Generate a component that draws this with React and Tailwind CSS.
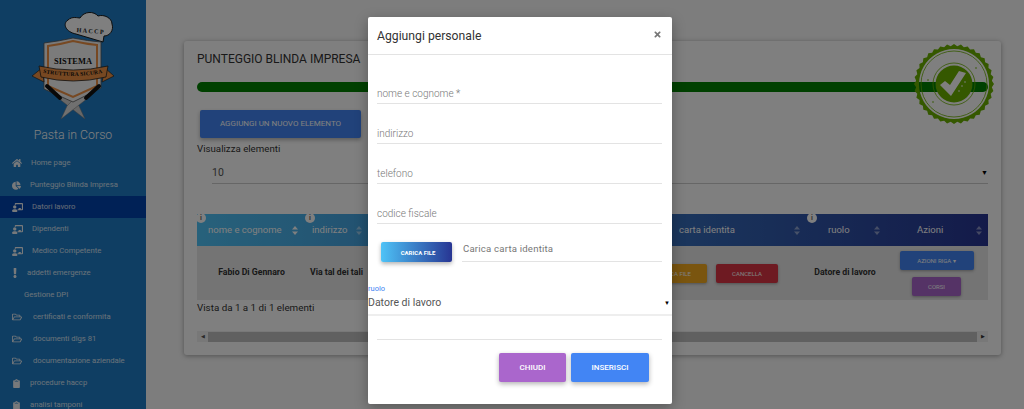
import React from "react";
import { FaHome, FaChartPie, FaChalkboardTeacher, FaExclamation, FaRegFolderOpen, FaClipboard, FaTimes } from "react-icons/fa";

const font = { fontFamily: "Roboto, 'Liberation Sans', sans-serif" };

const menu = [
  { icon: FaHome, label: "Home page", pl: "pl-[12px]", gap: "w-[19px]", size: 10 },
  { icon: FaChartPie, label: "Punteggio Blinda Impresa", pl: "pl-[12px]", gap: "w-[18px]", size: 9 },
  { icon: FaChalkboardTeacher, label: "Datori lavoro", pl: "pl-[12px]", gap: "w-[20px]", size: 11, active: true },
  { icon: FaChalkboardTeacher, label: "Dipendenti", pl: "pl-[12px]", gap: "w-[20px]", size: 11 },
  { icon: FaChalkboardTeacher, label: "Medico Competente", pl: "pl-[12px]", gap: "w-[20px]", size: 11 },
  { icon: FaExclamation, label: "addetti emergenze", pl: "pl-[10px]", gap: "w-[17px]", size: 10 },
  { label: "Gestione DPI", pl: "pl-[24px]" },
  { icon: FaRegFolderOpen, label: "certificati e conformita", pl: "pl-[12px]", gap: "w-[21px]", size: 10 },
  { icon: FaRegFolderOpen, label: "documenti dlgs 81", pl: "pl-[12px]", gap: "w-[21px]", size: 10 },
  { icon: FaRegFolderOpen, label: "documentazione aziendale", pl: "pl-[12px]", gap: "w-[21px]", size: 10 },
  { icon: FaClipboard, label: "procedure haccp", pl: "pl-[12px]", gap: "w-[18px]", size: 9 },
  { icon: FaClipboard, label: "analisi tamponi", pl: "pl-[12px]", gap: "w-[18px]", size: 9 },
];

function Logo() {
  return (
    <svg width="100" height="112" viewBox="0 0 100 112" className="block">
      <path d="M34 86 L41 80 L55 94 L61 107 Z" fill="#cfcfcf" stroke="#777" strokeWidth="0.5" />
      <path d="M64 86 L57 80 L43 94 L37 107 Z" fill="#e0e0e0" stroke="#777" strokeWidth="0.5" />
      <path d="M52 22 C42 20 38 12 44 8 C48 4 54 6 56 6 C60 -1 70 -1 74 4 C80 2 88 6 88 12 C90 18 86 24 80 24 L79 30 Z" fill="#fff" stroke="#1a1a1a" strokeWidth="1" />
      <text x="66" y="21" fontSize="6.2" fontWeight="700" textAnchor="middle" fontFamily="'Liberation Serif', serif" fill="#222" transform="rotate(4 66 21)" textLength="27">HACCP</text>
      <path d="M20 31 Q36 29 49 26 Q64 29 77 30 L77 76 L49 90 L20 77 Z" fill="#f2f2f2" stroke="#555" strokeWidth="0.8" />
      <path d="M24 34 Q38 32 49 29 Q62 32 73 33 L73 74 L49 85 L24 74 Z" fill="#f6f6f6" stroke="#ee9144" strokeWidth="2" />
      <text x="49" y="52" fontSize="8.4" fontWeight="700" textAnchor="middle" fontFamily="'Liberation Serif', serif" fill="#111" textLength="38">SISTEMA</text>
      <path d="M18 56 L8 64 L20 70 Z" fill="#ee9144" stroke="#222" strokeWidth="0.7" />
      <path d="M81 56 L90 64 L78 70 Z" fill="#ee9144" stroke="#222" strokeWidth="0.7" />
      <path d="M15 54 Q49 62 84 54 L82 65 Q49 73 17 65 Z" fill="#ee9144" stroke="#222" strokeWidth="0.8" />
      <path id="band" d="M18 60.5 Q49 67.5 81 60.5" fill="none" />
      <text fontSize="5.6" fontWeight="700" fontFamily="'Liberation Serif', serif" fill="#111">
        <textPath href="#band" startOffset="1" textLength="60">STRUTTURA SICURA</textPath>
      </text>
      <path d="M23 74 L36 86" stroke="#111" strokeWidth="4" strokeLinecap="round" />
      <path d="M75 74 L62 86" stroke="#111" strokeWidth="4" strokeLinecap="round" />
    </svg>
  );
}

function Seal() {
  const n = 36;
  let d = "";
  for (let i = 0; i < n * 2; i++) {
    const r = i % 2 === 0 ? 40 : 38;
    const a = (i / (n * 2)) * Math.PI * 2;
    d += (i === 0 ? "M" : "L") + (40 + r * Math.cos(a)).toFixed(2) + " " + (40 + r * Math.sin(a)).toFixed(2) + " ";
  }
  d += "Z";
  return (
    <svg width="80" height="80" viewBox="0 0 80 80" className="block">
      <path d={d + " M40 5 a35 35 0 1 0 0.01 0 Z"} fill="#6ab000" fillRule="evenodd" />
      <circle cx="40" cy="40" r="33" fill="none" stroke="#6ab000" strokeWidth="0.8" />
      <circle cx="40" cy="40" r="21" fill="none" stroke="#6ab000" strokeWidth="0.8" />
      <circle cx="40" cy="40" r="18.5" fill="#6ab000" />
      <path d="M26 41 L37 52 L52 29 L45 27 L36 41 L31 37 Z" fill="#fff" />
      <circle cx="48" cy="42" r="0.8" fill="#fff" />
      <circle cx="51" cy="38" r="0.8" fill="#fff" />
      <circle cx="45" cy="47" r="0.8" fill="#fff" />
      <circle cx="62" cy="24" r="0.8" fill="#6ab000" />
      <circle cx="19" cy="58" r="0.8" fill="#6ab000" />
      <circle cx="14" cy="36" r="0.8" fill="#6ab000" />
    </svg>
  );
}

function Sort({ light }) {
  return (
    <svg width="6" height="9" viewBox="0 0 6 9" className="block shrink-0" fill="#ffffff" opacity={light ? 1 : 0.45}>
      <path d="M3 0 L6 3.6 L0 3.6 Z" />
      <path d="M3 9 L6 5.4 L0 5.4 Z" />
    </svg>
  );
}

function Info({ className }) {
  return (
    <span className={"absolute w-[10px] h-[10px] rounded-full bg-white text-[#666] text-[7px] leading-[10px] font-bold text-center " + className}>i</span>
  );
}

function Field({ label }) {
  return (
    <div className="h-[40px] flex items-end border-b border-[#e3e3e3]">
      <span className="text-[10px] leading-[18px] font-light text-[#777]">{label}</span>
    </div>
  );
}

export default function App() {
  return (
    <div className="relative flex w-[1024px] h-[409px] overflow-hidden bg-[#fafafa]" style={font}>
      <aside className="w-[146px] shrink-0 h-[409px] overflow-hidden bg-[#1e7cc6] text-white">
        <div className="h-[126px] pt-[12px] pl-[24px]"><Logo /></div>
        <div className="h-[26px] text-center text-[12.3px] leading-[18px] font-light text-white">Pasta in Corso</div>
        <nav className="flex flex-col">
          {menu.map((m, i) => {
            const I = m.icon;
            return (
              <div key={i} className={"h-[22px] shrink-0 flex items-center text-[7.7px] text-white " + m.pl + (m.active ? " bg-[#0042ac]" : "")}>
                {I && (
                  <span className={"flex items-center shrink-0 " + m.gap}>
                    <I size={m.size} color="#eef2f6" />
                  </span>
                )}
                <span className="opacity-80 whitespace-nowrap">{m.label}</span>
              </div>
            );
          })}
        </nav>
      </aside>

      <main className="flex-1 pl-[38px] pt-[41px]">
        <section className="relative w-[817px] h-[314px] bg-white rounded-[3px] shadow-[0_1px_5px_rgba(0,0,0,0.35)] px-[13px] pt-[10px]">
          <h1 className="text-[12px] leading-[17px] text-[#333] font-normal whitespace-nowrap">PUNTEGGIO BLINDA IMPRESA</h1>
          <div className="mt-[14px] h-[10px] w-[791px] rounded-full bg-[#008000]" />
          <button className="block mt-[18px] ml-[3px] w-[161px] h-[28px] bg-[#4285f4] rounded-[2px] shadow-[0_2px_4px_rgba(0,0,0,0.3)] text-white text-[8px] uppercase">Aggiungi un nuovo elemento</button>
          <div className="mt-[4px] text-[9.7px] leading-[14px] text-[#333]">Visualizza elementi</div>
          <div className="mt-[7px] ml-[15px] w-[776px] h-[21px] border-b border-[#ccc] flex items-center justify-between text-[10.5px] text-[#555]">
            <span>10</span>
            <span className="text-[7px] text-black">▼</span>
          </div>

          <div className="relative mt-[30px] w-[791px]">
            <div className="grid grid-cols-[108px_367px_133px_80px_103px] h-[32px] bg-gradient-to-r from-[#4fc3f7] to-[#283593] items-center text-white text-[9.5px]">
              <div className="flex items-center pl-[11px]"><span className="w-[84px]">nome e cognome</span><Sort light /></div>
              <div className="flex items-center pl-[7px]"><span className="w-[44px]">indirizzo</span><Sort /></div>
              <div className="flex items-center pl-[7px]"><span className="w-[115px]">carta identita</span><Sort /></div>
              <div className="flex items-center pl-[23px]"><span className="w-[46px]">ruolo</span><Sort /></div>
              <div className="flex items-center pl-[32px]"><span className="w-[59px]">Azioni</span><Sort /></div>
            </div>
            <Info className="left-[-1px] top-[-1px]" />
            <Info className="left-[108px] top-[-1px]" />
            <Info className="left-[610px] top-[-1px]" />

            <div className="grid grid-cols-[108px_367px_133px_80px_103px] h-[54px] bg-[#e8e8e8] items-center text-[8.7px] font-bold text-[#333]">
              <div className="text-center whitespace-nowrap pl-[1px]">Fabio Di Gennaro</div>
              <div className="flex items-center justify-between">
                <span className="pl-[5px] whitespace-nowrap">Via tal dei tali</span>
                <button className="shrink-0 w-[77px] h-[19px] ml-auto mr-[-35px] bg-[#f5ab1e] rounded-[2px] shadow-[0_1px_3px_rgba(0,0,0,0.3)] text-white text-[6px] font-normal text-right pr-[16px]">CARICA FILE</button>
              </div>
              <div className="pl-[44px]">
                <button className="w-[62px] h-[19px] bg-[#dc3545] rounded-[2px] shadow-[0_1px_3px_rgba(0,0,0,0.3)] text-white text-[6px] font-normal">CANCELLA</button>
              </div>
              <div className="text-center whitespace-nowrap">Datore di lavoro</div>
              <div className="flex flex-col items-center gap-[7px]">
                <button className="w-[74px] h-[19px] bg-[#4285f4] rounded-[2px] shadow-[0_1px_3px_rgba(0,0,0,0.3)] text-white text-[6px] font-normal">AZIONI RIGA ▾</button>
                <button className="w-[49px] h-[19px] bg-[#aa66cc] rounded-[2px] shadow-[0_1px_3px_rgba(0,0,0,0.3)] text-white text-[6px] font-normal">CORSI</button>
              </div>
            </div>
          </div>
          <div className="mt-[1px] text-[9.8px] leading-[14px] text-[#333]">Vista da 1 a 1 di 1 elementi</div>
          <div className="mt-[16px] w-[791px] h-[11px] bg-[#f1f1f1] flex items-center">
            <span className="w-[11px] text-center text-[5px] text-[#555]">◀</span>
            <div className="w-[769px] h-[10px] bg-[#c1c1c1]" />
            <span className="w-[11px] text-center text-[5px] text-[#333]">▶</span>
          </div>
          <div className="absolute right-[7px] top-[3px]"><Seal /></div>
        </section>
      </main>

      <div className="absolute inset-0 bg-black/50" />

      <div className="absolute left-[368px] top-[17px] w-[304px] h-[387px] bg-white rounded-[2px] shadow-[0_4px_14px_rgba(0,0,0,0.3)] flex flex-col">
        <header className="h-[38px] shrink-0 border-b border-[#e3e3e3] flex items-center justify-between pl-[9px] pr-[10px]">
          <span className="text-[12.2px] leading-[18px] pt-[1px] text-[#333]">Aggiungi personale</span>
          <FaTimes size={9} color="#777" className="mb-[2px]" />
        </header>
        <div className="pl-[9px] pr-[10px] pt-[9px]">
          <Field label="nome e cognome *" />
          <Field label="indirizzo" />
          <Field label="telefono" />
          <Field label="codice fiscale" />
          <div className="flex h-[38px] items-end">
            <button className="ml-[4px] w-[71px] h-[20px] pl-[3px] bg-gradient-to-r from-[#4fc3f7] to-[#283593] rounded-[2px] shadow-[0_2px_4px_rgba(0,0,0,0.3)] text-white text-[6px] font-bold">CARICA FILE</button>
            <div className="ml-[10px] flex-1 h-[26px] border-b border-[#e3e3e3] pl-[1px] text-[9.6px] leading-[26px] text-[#777] tracking-[0.2px]">Carica carta identita</div>
          </div>
        </div>
        <div className="mt-[22px] text-[7.5px] leading-[10px] text-[#4285f4]">ruolo</div>
        <div className="h-[22px] pb-[3px] border-b-2 border-[#eee] flex items-center justify-between pr-[2px] text-[10.5px] text-[#555]">
          <span>Datore di lavoro</span>
          <span className="text-[6px] text-black">▼</span>
        </div>
        <div className="ml-[9px] mr-[10px] mt-[23px] border-b border-[#e3e3e3]" />
        <div className="flex justify-end gap-[5px] pr-[23px] mt-[13px]">
          <button className="w-[67px] h-[29px] bg-[#aa66cc] rounded-[2px] shadow-[0_2px_5px_rgba(0,0,0,0.3)] text-white text-[8px] font-medium">CHIUDI</button>
          <button className="w-[78px] h-[29px] bg-[#4285f4] rounded-[2px] shadow-[0_2px_5px_rgba(0,0,0,0.3)] text-white text-[8px] font-medium">INSERISCI</button>
        </div>
      </div>
    </div>
  );
}
